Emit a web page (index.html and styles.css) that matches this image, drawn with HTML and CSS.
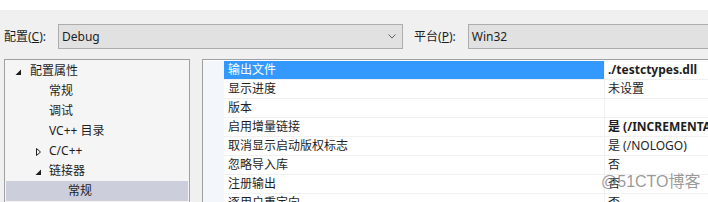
FILE: index.html
```html
<!DOCTYPE html>
<html lang="zh-CN">
<head>
<meta charset="utf-8">
<title>属性页</title>
<link rel="stylesheet" href="styles.css">
</head>
<body>
<div class="page">
  <div class="titlebar"></div>
  <div class="toolbar">
    <span class="label">配置(<u>C</u>):</span>
    <div class="combo combo-config">
      <span class="combo-text">Debug</span>
      <svg class="chev" width="8" height="5" viewBox="0 0 8 5"><path d="M0.5 0.5 L4 4 L7.5 0.5" fill="none" stroke="#606060" stroke-width="1"/></svg>
    </div>
    <span class="label label-platform">平台(<u>P</u>):</span>
    <div class="combo combo-platform">
      <span class="combo-text">Win32</span>
    </div>
  </div>
  <div class="panels">
    <div class="tree">
      <div class="node lvl0"><span class="exp"><svg width="19" height="20" viewBox="0 0 19 20"><path d="M10 8.5 L10 14 L4.5 14 Z" fill="#1e1e1e"/></svg></span><span>配置属性</span></div>
      <div class="node lvl1"><span class="exp"></span><span>常规</span></div>
      <div class="node lvl1"><span class="exp"></span><span>调试</span></div>
      <div class="node lvl1"><span class="exp"></span><span>VC++ 目录</span></div>
      <div class="node lvl1"><span class="exp"><svg width="19" height="20" viewBox="0 0 19 20"><path d="M6.5 7.5 L6.5 14.5 L10.5 11 Z" fill="none" stroke="#1e1e1e" stroke-width="1"/></svg></span><span>C/C++</span></div>
      <div class="node lvl1"><span class="exp"><svg width="19" height="20" viewBox="0 0 19 20"><path d="M11 8.5 L11 14 L5.5 14 Z" fill="#1e1e1e"/></svg></span><span>链接器</span></div>
      <div class="node lvl2 selected"><span class="exp"></span><span>常规</span></div>
    </div>
    <div class="grid">
      <div class="row sel"><span class="gut"></span><span class="name">输出文件</span><span class="val bold">./testctypes.dll</span></div>
      <div class="row"><span class="gut"></span><span class="name">显示进度</span><span class="val">未设置</span></div>
      <div class="row"><span class="gut"></span><span class="name">版本</span><span class="val"></span></div>
      <div class="row"><span class="gut"></span><span class="name">启用增量链接</span><span class="val bold">是 (/INCREMENTAL)</span></div>
      <div class="row"><span class="gut"></span><span class="name">取消显示启动版权标志</span><span class="val">是 (/NOLOGO)</span></div>
      <div class="row"><span class="gut"></span><span class="name">忽略导入库</span><span class="val">否</span></div>
      <div class="row"><span class="gut"></span><span class="name">注册输出</span><span class="val">否</span></div>
      <div class="row"><span class="gut"></span><span class="name">逐用户重定向</span><span class="val">否</span></div>
      <div class="gutter-fill"><span class="gut"></span></div>
    </div>
  </div>
  <div class="watermark">@51CTO博客</div>
</div>
</body>
</html>
```

FILE: styles.css
```css
html, body {
  margin: 0;
  padding: 0;
  width: 708px;
  height: 202px;
  overflow: hidden;
  background: #f0f0f0;
}

.page {
  position: relative;
  width: 708px;
  height: 202px;
  overflow: hidden;
  font-family: "Noto Sans", "Noto Sans CJK SC", sans-serif;
  font-size: 12px;
  color: #1e1e1e;
}

.titlebar {
  height: 10px;
  background: #ffffff;
}

.toolbar {
  display: flex;
  align-items: center;
  height: 25px;
  padding: 14px 0 10px 4px;
  white-space: nowrap;
}

.label {
  line-height: 16px;
}

.label u {
  text-decoration-thickness: 1px;
  text-underline-offset: 1px;
}

.combo {
  box-sizing: border-box;
  height: 25px;
  border: 1px solid #adadad;
  background: #e1e1e1;
  display: flex;
  align-items: center;
  padding-left: 3px;
  flex-shrink: 0;
}

.combo-config {
  width: 345px;
  margin-left: 12px;
  position: relative;
}

.combo-config .combo-text {
  flex: 1;
}

.chev {
  margin-right: 6px;
}

.label-platform {
  margin-left: 11px;
}

.combo-platform {
  width: 260px;
  margin-left: 12px;
  border-right: none;
}

.combo-text {
  line-height: 16px;
}

.panels {
  display: flex;
  padding-left: 4px;
  height: 200px;
}

.tree {
  box-sizing: border-box;
  width: 186px;
  flex-shrink: 0;
  border: 1px solid #a0a0a0;
  background: #f5f5f5;
  padding: 1px 1px 0 1px;
}

.node {
  height: 20px;
  display: flex;
  align-items: center;
  white-space: nowrap;
  line-height: 20px;
}

.node .exp {
  width: 19px;
  height: 20px;
  flex-shrink: 0;
  display: block;
}

.node .exp svg {
  display: block;
}

.lvl0 { padding-left: 5px; }
.lvl1 { padding-left: 24px; }
.lvl2 { padding-left: 43px; }

.node.selected {
  background: #cccedb;
}

.grid {
  box-sizing: border-box;
  margin-left: 12px;
  width: 600px;
  flex-shrink: 0;
  border-top: 1px solid #a0a0a0;
  border-left: 1px solid #a0a0a0;
  background: #ffffff;
  padding-top: 1px;
  display: flex;
  flex-direction: column;
}

.grid::before {
  content: "";
}

.row {
  display: flex;
  height: 19px;
  flex-shrink: 0;
}

.gut {
  width: 21px;
  flex-shrink: 0;
  background: #f3f6fb;
}

.gutter-fill {
  flex: 1;
  display: flex;
}

.name {
  box-sizing: border-box;
  width: 380px;
  flex-shrink: 0;
  padding-left: 4px;
  line-height: 18px;
  border-bottom: 1px solid #f0f0f0;
  white-space: nowrap;
}

.val {
  box-sizing: border-box;
  flex: 1;
  padding-left: 3px;
  line-height: 18px;
  border-bottom: 1px solid #f0f0f0;
  border-left: 1px solid #f0f0f0;
  white-space: nowrap;
  overflow: hidden;
}

.bold {
  font-weight: 700;
}

.row.sel .name {
  background: #3399ff;
  color: #ffffff;
}

.watermark {
  position: absolute;
  left: 601px;
  top: 172px;
  font-family: "Liberation Sans", "Noto Sans CJK SC", sans-serif;
  font-size: 16px;
  line-height: 20px;
  color: rgba(120, 120, 120, 0.75);
  white-space: nowrap;
}
```
